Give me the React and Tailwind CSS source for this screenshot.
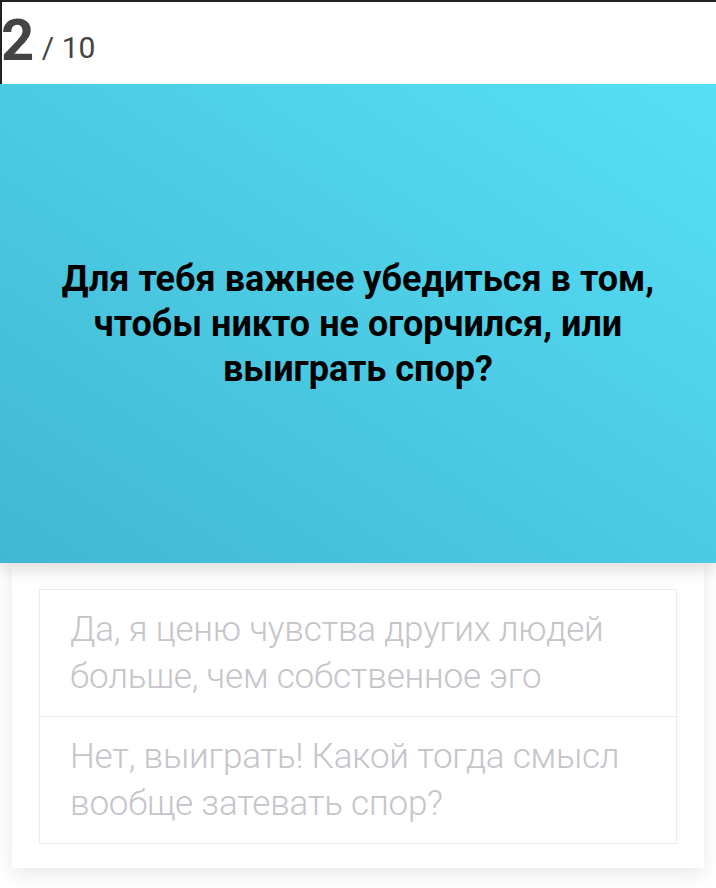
const question = 'Для тебя важнее убедиться в том, чтобы никто не огорчился, или выиграть спор?';

const answers = [
  'Да, я ценю чувства других людей больше, чем собственное эго',
  'Нет, выиграть! Какой тогда смысл вообще затевать спор?'
];

const App = () => {
  return (
    <div className="w-[716px] h-[888px] bg-white overflow-hidden font-['Roboto',sans-serif]">
      <div className="h-[84px] border-t-2 border-l-2 border-[#222] flex items-end pb-[22px] text-[#444]">
        <span className="text-[58px] leading-[44px] font-bold tracking-tight -ml-[1px]">2</span>
        <span className="text-[30px] leading-[28px] ml-[9px]">/ 10</span>
      </div>

      <div className="relative z-10 h-[479px] bg-gradient-to-tr from-[#42b7d2] to-[#56e0f6] shadow-[0_8px_14px_rgba(0,0,0,0.12)] flex items-center justify-center px-[40px] pt-[2px]">
        <h2 className="text-[36px] leading-[45px] font-bold text-black text-center max-w-[620px]">
          {question}
        </h2>
      </div>

      <div className="mx-[12px] bg-white shadow-[0_6px_18px_rgba(0,0,0,0.09)] px-[27px] pt-[26px] pb-[24px]">
        <div className="border border-[#ececec]">
          {answers.map((answer, i) => (
            <div
              key={i}
              className={`px-[30px] py-[16px] text-[35px] leading-[47px] font-light text-[#c6c4ca] tracking-[-0.2px] ${i > 0 ? 'border-t border-[#ececec]' : ''}`}
            >
              {answer}
            </div>
          ))}
        </div>
      </div>
    </div>
  );
};

export default App;
